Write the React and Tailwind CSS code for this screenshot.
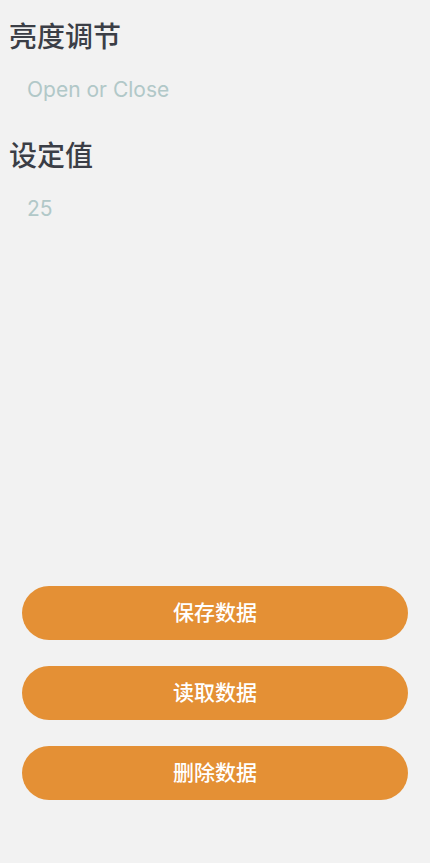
import React from 'react';

const FONT = "font-['Inter','Noto_Sans_CJK_SC',sans-serif]";

function Field({ label, value }) {
    return (
        <div className="flex flex-col">
            <div className="pl-[9px] text-[28px] leading-[36px] font-medium text-[#3b3e46]">{label}</div>
            <div className="pl-[27px] mt-[21px] text-[21px] leading-[28px] text-[#b1c8c8]">{value}</div>
        </div>
    );
}

export default function App() {
    const actions = ['保存数据', '读取数据', '删除数据'];

    return (
        <div className={`${FONT} h-[863px] w-full bg-[#f2f2f2] flex flex-col`}>
            <div className="pt-[19px] flex flex-col gap-[34px]">
                <Field label="亮度调节" value="Open or Close" />
                <Field label="设定值" value="25" />
            </div>

            {/* Actions */}
            <div className="mt-auto px-[22px] pb-[63px] flex flex-col gap-[26px]">
                {actions.map((a) => (
                    <button
                        key={a}
                        className="h-[54px] w-full rounded-full bg-[#e49035] text-white text-[21px] font-medium"
                    >
                        {a}
                    </button>
                ))}
            </div>
        </div>
    );
}
